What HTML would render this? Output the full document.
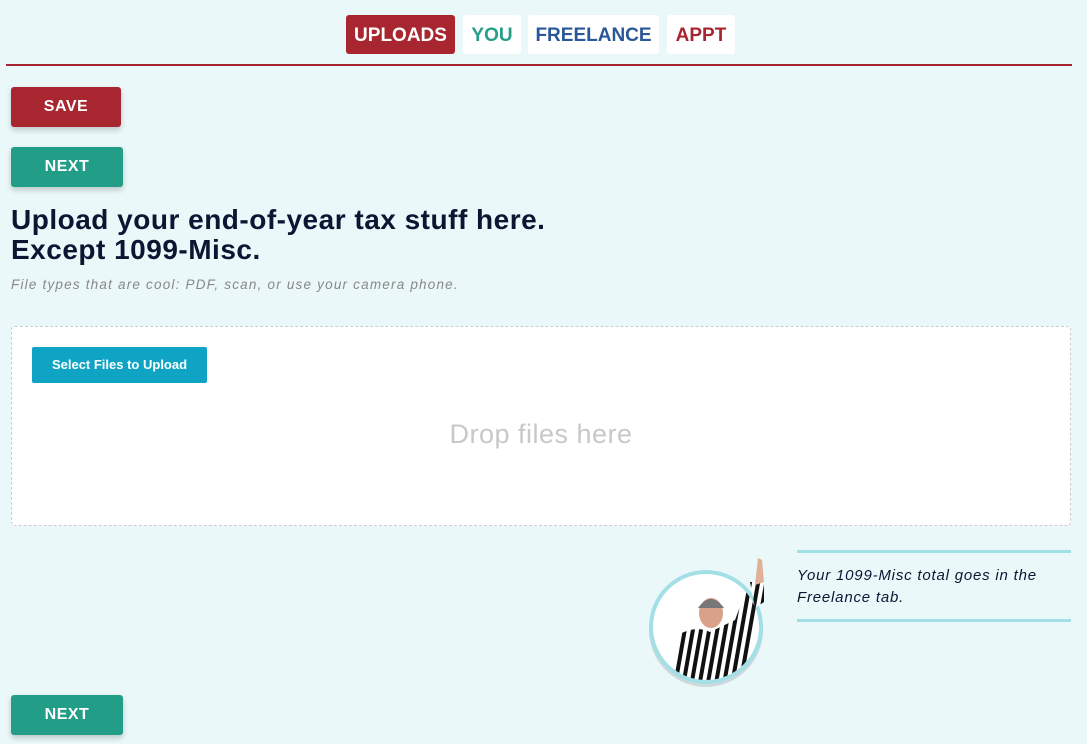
<!DOCTYPE html>
<html><head><style>
body{margin:0;width:1087px;height:744px;background:#eaf8f9;font-family:"Liberation Sans",sans-serif;position:relative;overflow:hidden}
.tab{position:absolute;top:15px;height:39px;background:#fff;border-radius:3px;font-weight:900;font-size:19px;line-height:41px;text-align:center}
.hr{position:absolute;left:6px;top:64px;width:1066px;height:2px;background:#a4262f}
.btn{position:absolute;left:11px;width:112px;height:40px;border-radius:3px;color:#fff;font-weight:bold;font-size:16px;text-align:center;line-height:40px;letter-spacing:.5px;box-shadow:0 3px 6px rgba(0,0,0,.2)}
h1{position:absolute;left:11px;top:205px;margin:0;font-size:28px;line-height:30px;color:#0c1633;font-weight:900;letter-spacing:.5px}
.sub{position:absolute;left:11px;top:277px;font-size:13.5px;font-style:italic;color:#888;letter-spacing:1.2px}
.drop{position:absolute;left:11px;top:326px;width:1058px;height:198px;background:#fff;border:1px dashed #ccc;border-radius:4px}
.sel{position:absolute;left:20px;top:20px;width:175px;height:36px;background:#0fa4c3;color:#fff;font-weight:bold;font-size:13px;line-height:36px;text-align:center;border-radius:2px}
.dt{position:absolute;left:0;right:0;top:92px;text-align:center;font-size:27px;color:#c8c8c8;letter-spacing:.5px}
.line{position:absolute;left:797px;width:274px;height:3px;background:#a2dfe6}
.note{position:absolute;left:797px;top:565px;font-size:15px;font-style:italic;color:#0c1633;line-height:22px;letter-spacing:.8px}
</style></head><body>
<div class="tab" style="left:346px;width:109px;background:#a8262f;color:#fff">UPLOADS</div>
<div class="tab" style="left:463px;width:58px;color:#269e8a">YOU</div>
<div class="tab" style="left:528px;width:131px;color:#2a5797">FREELANCE</div>
<div class="tab" style="left:667px;width:68px;color:#a8262f">APPT</div>
<div class="hr"></div>
<div class="btn" style="top:87px;width:110px;background:#a8262f">SAVE</div>
<div class="btn" style="top:147px;background:#229e88">NEXT</div>
<h1>Upload your end-of-year tax stuff here.<br>Except 1099-Misc.</h1>
<div class="sub">File types that are cool: PDF, scan, or use your camera phone.</div>
<div class="drop"><div class="sel">Select Files to Upload</div><div class="dt">Drop files here</div></div>
<div class="line" style="top:550px"></div>
<div class="line" style="top:619px"></div>
<div class="note">Your 1099-Misc total goes in the<br>Freelance tab.</div>
<svg style="position:absolute;left:640px;top:550px" width="140" height="145">
<defs><clipPath id="c"><circle cx="66" cy="77" r="53"/></clipPath>
<pattern id="s" width="8" height="8" patternUnits="userSpaceOnUse" patternTransform="rotate(10)"><rect width="8" height="8" fill="#fff"/><rect width="4" height="8" fill="#111"/></pattern></defs>
<circle cx="66" cy="80" r="57" fill="rgba(0,0,0,.12)"/>
<circle cx="66" cy="77" r="57" fill="#a2dfe6"/>
<circle cx="66" cy="77" r="53" fill="#fff"/>
<g clip-path="url(#c)"><path d="M30 145 L38 85 Q55 75 70 82 L95 70 L110 30 L122 38 L112 95 L105 145Z" fill="url(#s)"/>
<ellipse cx="71" cy="63" rx="12" ry="15" fill="#d9a08a"/><path d="M58 58 Q71 40 84 58 Z" fill="#777"/></g>
<path d="M110 32 L115 58 L124 52 L124 32Z" fill="url(#s)"/>
<path d="M115 35 L118 8 L122 10 L124 32Z" fill="#e0b098"/>
</svg>
<div class="btn" style="top:695px;background:#229e88">NEXT</div>
</body></html>
